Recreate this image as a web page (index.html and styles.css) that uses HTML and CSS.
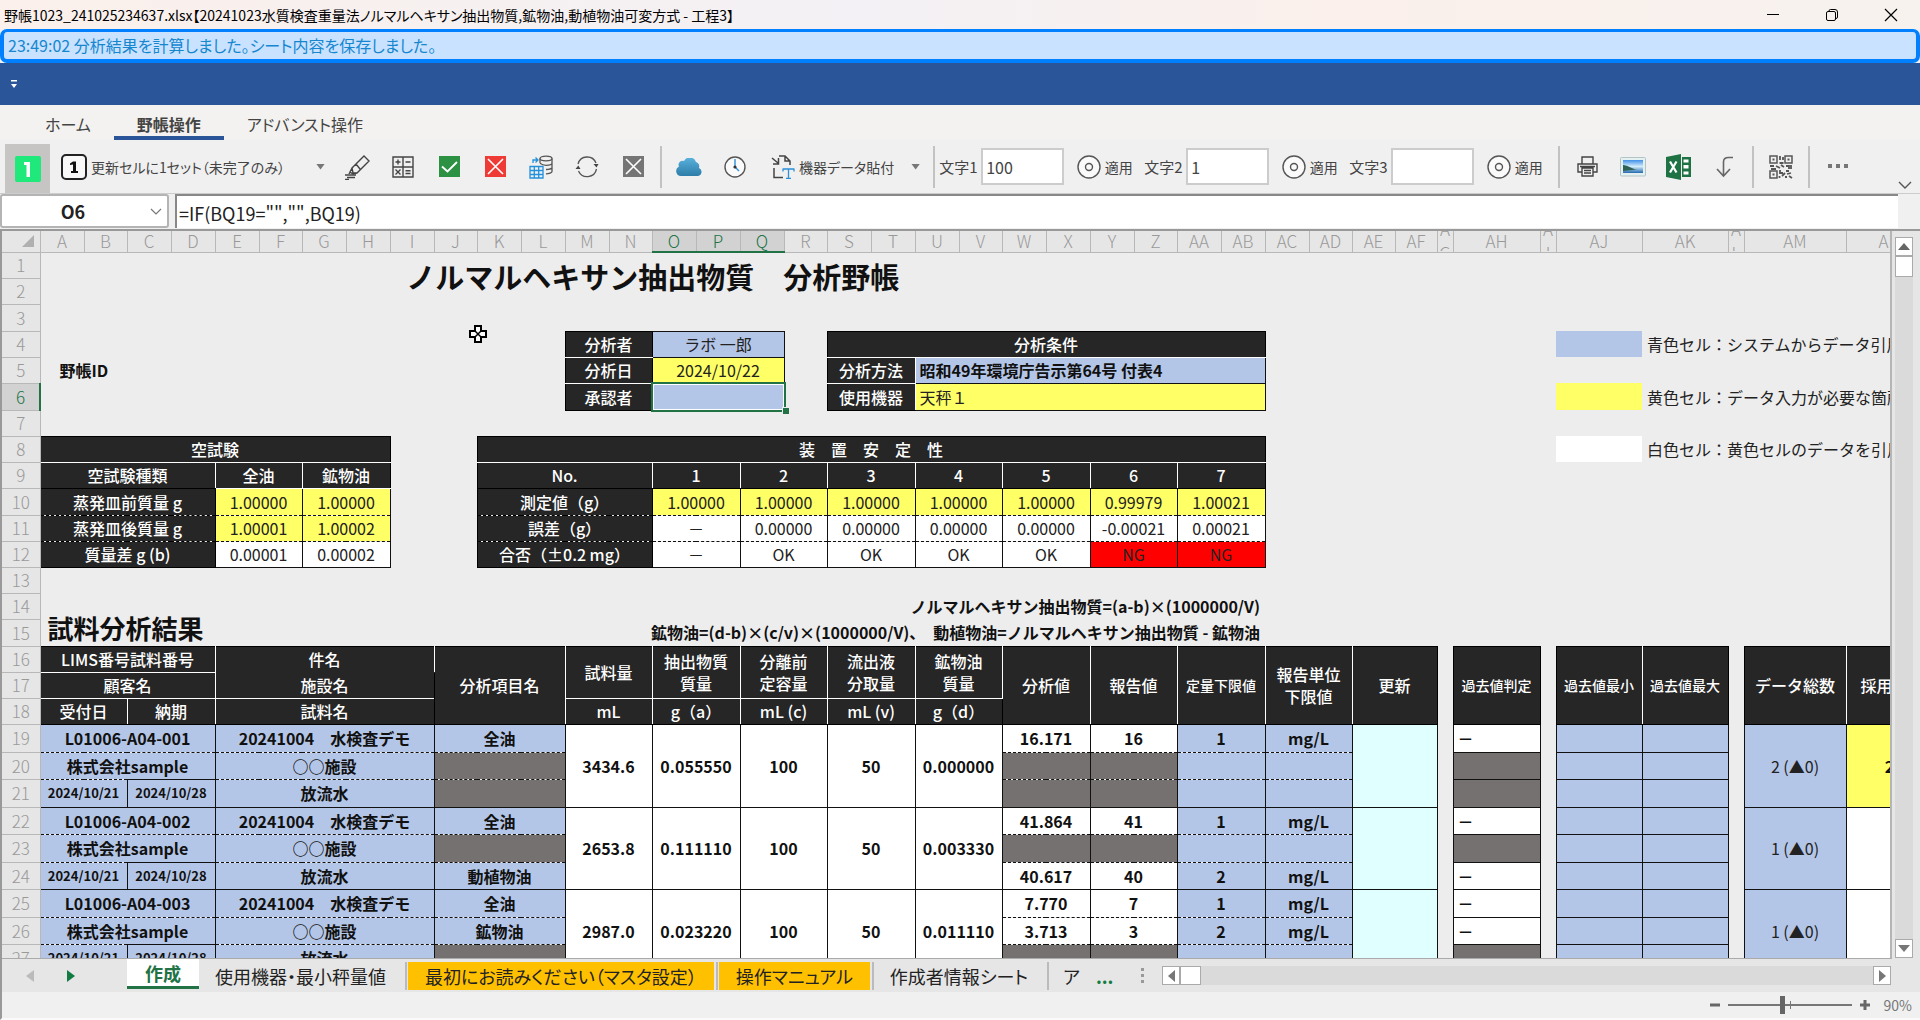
FILE: index.html
```html
<!DOCTYPE html>
<html lang="ja">
<head>
<meta charset="utf-8">
<title>野帳1023_241025234637.xlsx</title>
<link rel="stylesheet" href="styles.css">
</head>
<body>
<header class="titlebar">
  <span class="title-text">野帳1023_241025234637.xlsx【20241023水質検査重量法ノルマルヘキサン抽出物質,鉱物油,動植物油可変方式 - 工程3】</span>
  <div class="window-buttons">
    <button aria-label="最小化"><svg width="14" height="14" viewBox="0 0 14 14"><path d="M1 6.500h12" stroke="#000" fill="none"/></svg></button>
    <button aria-label="元に戻す"><svg width="14" height="14" viewBox="0 0 14 14" fill="none" stroke="#000"><rect x="1.500" y="3.500" width="9" height="9" rx="1.500"/><path d="M4 3.500V3a1.500 1.500 0 0 1 1.500-1.500H10A2.500 2.500 0 0 1 12.500 4v5a1.500 1.500 0 0 1-1.500 1.500"/></svg></button>
    <button aria-label="閉じる"><svg width="14" height="14" viewBox="0 0 14 14"><path d="M1 1l12 12M13 1L1 13" stroke="#000" stroke-width="1.200" fill="none"/></svg></button>
  </div>
</header>
<p class="message" role="status">23:49:02 分析結果を計算しました。シート内容を保存しました。</p>
<div class="quickbar">
  <button aria-label="クイックアクセスのカスタマイズ"><svg width="8" height="9" viewBox="0 0 8 9" fill="#fff"><path d="M1 0h6v1.500H1zM1 4h6L4 8z"/></svg></button>
</div>
<nav class="ribbon-tabs">
  <button class="rtab">ホーム</button>
  <button class="rtab current">野帳操作</button>
  <button class="rtab">アドバンスト操作</button>
</nav>
<div class="toolbar">
  <button class="pressed" aria-label="1"><svg width="26" height="26" viewBox="0 0 26 26"><rect width="26" height="26" rx="2" fill="#1fe97b"/><path d="M9 6h6v15h-3.500V9H9z" fill="#fff"/></svg></button>
  <button class="label-tool update"><svg width="26" height="26" viewBox="0 0 26 26"><rect x="1" y="1" width="24" height="24" rx="4" fill="#f8f8f8" stroke="#222" stroke-width="2"/><path d="M9 9.500l3-2h3V17h2v2H10v-2h2v-6.500L9 11z" fill="#111"/></svg><span>更新セルに1セット（未完了のみ）</span></button>
  <button class="caret" aria-label="更新セルのメニュー"></button>
  <button class="tool" aria-label="マーカー"><svg width="26" height="26" viewBox="0 0 26 26" fill="none" stroke="#444" stroke-width="1.400"><path d="M20 2l5 5-12 12H9l-1-5zM12 10l4 5M8 14l-2 4 3 2 4-1M6 18l-1 2"/><path d="M1 21h11M3 23.500h8M1 25.500h4" stroke-width="1.600"/></svg></button>
  <button class="tool" aria-label="計算"><svg width="22" height="22" viewBox="0 0 22 22" fill="none" stroke="#444" stroke-width="1.400"><path d="M1 1h20v20H1zM11 1v20M1 11h20M3.500 6h5M6 3.500v5M13.500 6h5M3.500 13.500l5 5M8.500 13.500l-5 5M13.500 14.700h5M13.500 17.500h5"/></svg></button>
  <button class="tool" aria-label="完了"><svg width="21" height="21" viewBox="0 0 21 21"><path d="M0 0h21v21H0z" fill="#2d9144"/><path d="M3 10.500l5.500 5L18 6" fill="none" stroke="#fff" stroke-width="1.800"/></svg></button>
  <button class="tool" aria-label="取消"><svg width="21" height="21" viewBox="0 0 21 21"><path d="M0 0h21v21H0z" fill="#ee3b36"/><path d="M3 3l15 15M18 3L3 18" fill="none" stroke="#fff" stroke-width="1.600"/></svg></button>
  <button class="tool" aria-label="データ取込"><svg width="24" height="24" viewBox="0 0 24 24" fill="none"><g stroke="#555" stroke-width="1.300"><ellipse cx="17" cy="3.500" rx="6" ry="2.300"/><path d="M11 3.500V8M23 3.500v13c0 1-3 2.300-6 2.300M23 8c0 1.300-3 2.300-6 2.300-2 0-4-.5-6-2M23 12.500c0 1-3 2-6 2"/></g><path d="M1 11.500h13v11.500H1zM1 15.500h13M1 19.500h13M5.300 11v12M9.700 11v12M4 8V5h5M6.500 2.500L9 5 6.500 7.500" stroke="#2390dc" stroke-width="1.300"/></svg></button>
  <button class="tool" aria-label="更新"><svg width="24" height="24" viewBox="0 0 24 24" fill="none" stroke="#555" stroke-width="1.300"><path d="M3 9a9.500 9.500 0 0 1 18-1M21.500 14a9.500 9.500 0 0 1-18 2"/><path d="M18.500 9h5l-2 3.500zM.5 14h5l-2.200-3.500z" fill="#444" stroke="none"/></svg></button>
  <button class="tool" aria-label="消去"><svg width="21" height="21" viewBox="0 0 21 21"><path d="M0 0h21v21H0z" fill="#757575"/><path d="M3 3l15 15M18 3L3 18" fill="none" stroke="#fff" stroke-width="1.600"/></svg></button>
  <span class="sep"></span>
  <button class="tool" aria-label="クラウド"><svg width="26" height="18" viewBox="0 0 26 18"><defs><linearGradient id="cloud" x1="0" y1="0" x2="0" y2="1"><stop offset="0" stop-color="#59b2dd"/><stop offset="1" stop-color="#2d7da8"/></linearGradient></defs><path d="M5 18a5 5 0 0 1-2-9.500A4 4 0 0 1 8 3a6.500 6.500 0 0 1 12 1 5 5 0 0 1 3 6 4.200 4.200 0 0 1-1 8z" fill="url(#cloud)"/></svg></button>
  <button class="tool" aria-label="時刻"><svg width="22" height="22" viewBox="0 0 22 22" fill="none"><circle cx="11" cy="11" r="10" stroke="#555" stroke-width="1.400" fill="#fafafa"/><path d="M11 3v8l4 4" stroke="#2d8fd8" stroke-width="1.400"/><circle cx="11" cy="11" r="1.600" fill="#333"/></svg></button>
  <button class="label-tool paste"><svg width="24" height="24" viewBox="0 0 24 24" fill="none" stroke="#444" stroke-width="1.500"><path d="M8 1h6l5 5v4M14 1v5h5M3 13v9.500h9M1 3l6 5M7.500 3v6H2"/><path d="M12 14h11M12 13.500v3M23 13.500v3M17.500 14v9.500M15 23.500h5" stroke="#2d8fd8" stroke-width="1.300"/></svg><span>機器データ貼付</span></button>
  <button class="caret" aria-label="貼付メニュー"></button>
  <span class="sep"></span>
  <div class="field"><label for="t1">文字1</label><input id="t1" type="text" value="100"></div>
  <button class="label-tool apply"><svg width="24" height="24" viewBox="0 0 24 24" fill="#fafafa" stroke="#555" stroke-width="1.400"><circle cx="12" cy="12" r="11"/><circle cx="12" cy="12" r="3.500"/></svg><span>適用</span></button>
  <div class="field"><label for="t2">文字2</label><input id="t2" type="text" value="1"></div>
  <button class="label-tool apply"><svg width="24" height="24" viewBox="0 0 24 24" fill="#fafafa" stroke="#555" stroke-width="1.400"><circle cx="12" cy="12" r="11"/><circle cx="12" cy="12" r="3.500"/></svg><span>適用</span></button>
  <div class="field"><label for="t3">文字3</label><input id="t3" type="text" value=""></div>
  <button class="label-tool apply"><svg width="24" height="24" viewBox="0 0 24 24" fill="#fafafa" stroke="#555" stroke-width="1.400"><circle cx="12" cy="12" r="11"/><circle cx="12" cy="12" r="3.500"/></svg><span>適用</span></button>
  <span class="sep"></span>
  <button class="tool" aria-label="印刷"><svg width="21" height="21" viewBox="0 0 21 21" fill="none" stroke="#444" stroke-width="1.400"><path d="M5 8V1h11v7M4.500 16H1V8h19v8h-3.500M5 12h11v8H5zM7 14.500h7M7 17h7M3 10.500h15"/></svg></button>
  <button class="tool" aria-label="画像"><svg width="26" height="20" viewBox="0 0 26 20"><defs><linearGradient id="sky" x1="0" y1="0" x2="0" y2="1"><stop offset="0" stop-color="#3f8fe8"/><stop offset=".5" stop-color="#d3ecfa"/><stop offset="1" stop-color="#2469b0"/></linearGradient></defs><rect x=".5" y=".5" width="25" height="18.500" rx="1" fill="#e4efef" stroke="#b3c4c6"/><path d="M3 3h20v13H3z" fill="url(#sky)"/><path d="M3 8c5 0 8 4 14 4.500L3 14z" fill="#2d6153"/></svg></button>
  <button class="tool" aria-label="Excel"><svg width="26" height="26" viewBox="0 0 26 26"><path d="M16 3h9v20h-9z" fill="#1f7244"/><path d="M17.500 5.500h5v3h-5zM17.500 11h5v3.500h-5zM17.500 17.500h5v3h-5z" fill="#fff"/><path d="M0 3l15-3v26L0 23z" fill="#1f7244"/><path d="M4 7.500l6.500 11M10.500 7.500L4 18.500" stroke="#fff" stroke-width="2.200"/></svg></button>
  <button class="tool" aria-label="移動"><svg width="18" height="22" viewBox="0 0 18 22" fill="none" stroke="#666" stroke-width="1.600"><path d="M17 1.500h-4.500Q7.500 1.500 7.500 6v14M1 13l6.500 7 6.500-7"/></svg></button>
  <span class="sep"></span>
  <button class="tool" aria-label="QRコード"><svg width="24" height="24" viewBox="0 0 24 24" fill="none" stroke="#555" stroke-width="1.500"><path d="M1 1h7v7H1zM16 1h7v7h-7zM1 16h7v7H1z"/><path d="M3.500 3.500h2v2h-2zM18.500 3.500h2v2h-2zM3.500 18.500h2v2h-2z" fill="#555" stroke="none"/><path d="M11 1v4M14 2v3M10.500 8h4M1 11h4M7 11l4 2M12 10l3 2M17 11h3v3M22 10v4M11 15v3h3M13 21l3-3M17 16h3M18 19l4-1M20 21l3 2M10.500 21v2M16 22h2M2 14h5" stroke-width="1.800"/></svg></button>
  <span class="sep"></span>
  <button class="more" aria-label="その他"><svg width="20" height="5" viewBox="0 0 20 5" fill="#777"><path d="M0 0h4v4H0zM8 0h4v4H8zM16 0h4v4h-4z"/></svg></button>
  <button class="fold" aria-label="折りたたむ"><svg width="14" height="8" viewBox="0 0 14 8" fill="none" stroke="#555" stroke-width="1.400"><path d="M1 1l6 6 6-6"/></svg></button>
</div>
<div class="formulabar">
  <div class="namebox"><input type="text" value="O6" aria-label="名前ボックス"><button aria-label="名前の一覧"><svg width="12" height="7" viewBox="0 0 12 7" fill="none" stroke="#777" stroke-width="1.200"><path d="M1 1l5 5 5-5"/></svg></button></div>
  <input class="formula" type="text" aria-label="数式" value='=IF(BQ19="","",BQ19)'>
</div>
<main class="work">
  <div class="sheet">
    <table>
      <colgroup><col class="c38">
        <col class="c44"><col class="c43"><col class="c44"><col class="c44"><col class="c44"><col class="c43"><col class="c44"><col class="c44">
        <col class="c44"><col class="c43"><col class="c44"><col class="c44"><col class="c44"><col class="c43"><col class="c44"><col class="c44">
        <col class="c44"><col class="c43"><col class="c44"><col class="c44"><col class="c44"><col class="c43"><col class="c44"><col class="c44">
        <col class="c44"><col class="c43"><col class="c44"><col class="c44"><col class="c44"><col class="c43"><col class="c43"><col class="c42">
        <col class="c16"><col class="c87"><col class="c16"><col class="c86"><col class="c86"><col class="c16"><col class="c102"><col class="c87">
      </colgroup>
      <thead>
        <tr><th class="corner"><svg width="12" height="12" viewBox="0 0 12 12" fill="#b0b0b0"><path d="M12 0v12H0z"/></svg></th><th>A</th><th>B</th><th>C</th><th>D</th><th>E</th><th>F</th><th>G</th><th>H</th><th>I</th><th>J</th><th>K</th><th>L</th><th>M</th><th>N</th><th class="on">O</th><th class="on">P</th><th class="on">Q</th><th>R</th><th>S</th><th>T</th><th>U</th><th>V</th><th>W</th><th>X</th><th>Y</th><th>Z</th><th>AA</th><th>AB</th><th>AC</th><th>AD</th><th>AE</th><th>AF</th><th class="thin"><span>A<br>G</span></th><th>AH</th><th class="thin"><span>A<br>I</span></th><th>AJ</th><th>AK</th><th class="thin"><span>A<br>L</span></th><th>AM</th><th>AN</th></tr>
      </thead>
      <tbody>
        <tr><th>1</th><td colspan="28" rowspan="2" class="doc-title">ノルマルヘキサン抽出物質　分析野帳</td><td colspan="12"></td></tr>
        <tr><th>2</th><td colspan="12"></td></tr>
        <tr class="h27"><th>3</th><td colspan="40"></td></tr>
        <tr><th>4</th><td colspan="12"></td><td colspan="2" class="k wb">分析者</td><td colspan="3" class="d blue n">ラボ 一郎</td><td></td><td colspan="10" class="k wb">分析条件</td><td colspan="7"></td><td class="blue"></td><td colspan="4" class="legend">青色セル：システムからデータ引用</td></tr>
        <tr><th>5</th><td colspan="2" class="b">野帳ID</td><td colspan="10"></td><td colspan="2" class="k wb">分析日</td><td colspan="3" class="d yellow n">2024/10/22</td><td></td><td colspan="2" class="k wr wb">分析方法</td><td colspan="8" class="d blue left">昭和49年環境庁告示第64号 付表4</td><td colspan="12"></td></tr>
        <tr class="h27"><th class="on">6</th><td colspan="12"></td><td colspan="2" class="k">承認者</td><td colspan="3" class="d blue active"><i class="selection"></i></td><td></td><td colspan="2" class="k wr">使用機器</td><td colspan="8" class="d yellow left n">天秤１</td><td colspan="7"></td><td class="yellow"></td><td colspan="4" class="legend">黄色セル：データ入力が必要な箇所</td></tr>
        <tr><th>7</th><td colspan="40"></td></tr>
        <tr><th>8</th><td colspan="8" class="k wb">空試験</td><td colspan="2"></td><td colspan="18" class="k wb">装　置　安　定　性</td><td colspan="7"></td><td class="white"></td><td colspan="4" class="legend">白色セル：黄色セルのデータを引用</td></tr>
        <tr><th>9</th><td colspan="4" class="k wr">空試験種類</td><td colspan="2" class="k wr wb">全油</td><td colspan="2" class="k wb">鉱物油</td><td colspan="2"></td><td colspan="4" class="k wr">No.</td><td colspan="2" class="k wr">1</td><td colspan="2" class="k wr">2</td><td colspan="2" class="k wr">3</td><td colspan="2" class="k wr">4</td><td colspan="2" class="k wr">5</td><td colspan="2" class="k wr">6</td><td colspan="2" class="k">7</td><td colspan="12"></td></tr>
        <tr class="h27 r1"><th>10</th><td colspan="4" class="k q">蒸発皿前質量 g</td><td colspan="2" class="d yellow n q">1.00000</td><td colspan="2" class="d yellow n q">1.00000</td><td colspan="2"></td><td colspan="4" class="k q">測定値（g）</td><td colspan="2" class="d yellow n q">1.00000</td><td colspan="2" class="d yellow n q">1.00000</td><td colspan="2" class="d yellow n q">1.00000</td><td colspan="2" class="d yellow n q">1.00000</td><td colspan="2" class="d yellow n q">1.00000</td><td colspan="2" class="d yellow n q">0.99979</td><td colspan="2" class="d yellow n q">1.00021</td><td colspan="12"></td></tr>
        <tr class="r2"><th>11</th><td colspan="4" class="k q">蒸発皿後質量 g</td><td colspan="2" class="d yellow n q">1.00001</td><td colspan="2" class="d yellow n q">1.00002</td><td colspan="2"></td><td colspan="4" class="k q">誤差（g）</td><td colspan="2" class="d white n q">－</td><td colspan="2" class="d white n q">0.00000</td><td colspan="2" class="d white n q">0.00000</td><td colspan="2" class="d white n q">0.00000</td><td colspan="2" class="d white n q">0.00000</td><td colspan="2" class="d white n q">-0.00021</td><td colspan="2" class="d white n q">0.00021</td><td colspan="12"></td></tr>
        <tr class="r3"><th>12</th><td colspan="4" class="k q">質量差 g (b)</td><td colspan="2" class="d white n q">0.00001</td><td colspan="2" class="d white n q">0.00002</td><td colspan="2"></td><td colspan="4" class="k q">合否（±0.2 mg）</td><td colspan="2" class="d white n q">－</td><td colspan="2" class="d white n q">OK</td><td colspan="2" class="d white n q">OK</td><td colspan="2" class="d white n q">OK</td><td colspan="2" class="d white n q">OK</td><td colspan="2" class="d red n q">NG</td><td colspan="2" class="d red n q">NG</td><td colspan="12"></td></tr>
        <tr><th>13</th><td colspan="40"></td></tr>
        <tr><th>14</th><td colspan="8" rowspan="2" class="section">試料分析結果</td><td colspan="20" class="expr">ノルマルヘキサン抽出物質=(a-b)×(1000000/V)</td><td colspan="12"></td></tr>
        <tr class="h27"><th>15</th><td colspan="20" class="expr">鉱物油=(d-b)×(c/v)×(1000000/V)、　動植物油=ノルマルヘキサン抽出物質 - 鉱物油</td><td colspan="12"></td></tr>
        <tr><th>16</th><td colspan="4" class="k wr wb">LIMS番号試料番号</td><td colspan="5" class="k wr open">件名</td><td colspan="3" rowspan="3" class="k wr">分析項目名</td><td colspan="2" rowspan="2" class="k wr wb">試料量</td><td colspan="2" rowspan="2" class="k wr wb">抽出物質<br>質量</td><td colspan="2" rowspan="2" class="k wr wb">分離前<br>定容量</td><td colspan="2" rowspan="2" class="k wr wb">流出液<br>分取量</td><td colspan="2" rowspan="2" class="k wr wb">鉱物油<br>質量</td><td colspan="2" rowspan="3" class="k wr">分析値</td><td colspan="2" rowspan="3" class="k wr">報告値</td><td colspan="2" rowspan="3" class="k wr sm">定量下限値</td><td colspan="2" rowspan="3" class="k wr">報告単位<br>下限値</td><td colspan="2" rowspan="3" class="k">更新</td><td rowspan="3"></td><td rowspan="3" class="k sm">過去値判定</td><td rowspan="3"></td><td rowspan="3" class="k wr sm">過去値最小</td><td rowspan="3" class="k sm">過去値最大</td><td rowspan="3"></td><td rowspan="3" class="k wr">データ総数</td><td rowspan="3" class="k cut">採用</td></tr>
        <tr><th>17</th><td colspan="4" class="k wr wb">顧客名</td><td colspan="5" class="k wr wb">施設名</td></tr>
        <tr><th>18</th><td colspan="2" class="k wr">受付日</td><td colspan="2" class="k wr">納期</td><td colspan="5" class="k wr">試料名</td><td colspan="2" class="k wr">mL</td><td colspan="2" class="k wr">g（a）</td><td colspan="2" class="k wr">mL (c)</td><td colspan="2" class="k wr">mL (v)</td><td colspan="2" class="k wr">g（d）</td></tr>

        <tr class="h28 r1"><th>19</th><td colspan="4" class="d blue q">L01006-A04-001</td><td colspan="5" class="d blue q">20241004　水検査デモ</td><td colspan="3" class="d blue q">全油</td><td colspan="2" rowspan="3" class="d white">3434.6</td><td colspan="2" rowspan="3" class="d white">0.055550</td><td colspan="2" rowspan="3" class="d white">100</td><td colspan="2" rowspan="3" class="d white">50</td><td colspan="2" rowspan="3" class="d white">0.000000</td><td colspan="2" class="d white q">16.171</td><td colspan="2" class="d white q">16</td><td colspan="2" class="d blue q">1</td><td colspan="2" class="d blue q">mg/L</td><td colspan="2" rowspan="3" class="d cyan"></td><td rowspan="3"></td><td class="d white left">－</td><td rowspan="3"></td><td class="d blue"></td><td class="d blue"></td><td rowspan="3"></td><td rowspan="3" class="d blue n">2 (▲0)</td><td rowspan="3" class="d yellow">2</td></tr>
        <tr class="h27 r2"><th>20</th><td colspan="4" class="d blue q">株式会社sample</td><td colspan="5" class="d blue q">○○施設</td><td colspan="3" class="d gray q"></td><td colspan="2" class="d gray q"></td><td colspan="2" class="d gray q"></td><td colspan="2" class="d blue q"></td><td colspan="2" class="d blue q"></td><td class="d gray"></td><td class="d blue"></td><td class="d blue"></td></tr>
        <tr class="h28 r3"><th>21</th><td colspan="2" class="d blue q date">2024/10/21</td><td colspan="2" class="d blue date">2024/10/28</td><td colspan="5" class="d blue q">放流水</td><td colspan="3" class="d gray q"></td><td colspan="2" class="d gray q"></td><td colspan="2" class="d gray q"></td><td colspan="2" class="d blue q"></td><td colspan="2" class="d blue q"></td><td class="d gray"></td><td class="d blue"></td><td class="d blue"></td></tr>

        <tr class="h27 r1"><th>22</th><td colspan="4" class="d blue q">L01006-A04-002</td><td colspan="5" class="d blue q">20241004　水検査デモ</td><td colspan="3" class="d blue q">全油</td><td colspan="2" rowspan="3" class="d white">2653.8</td><td colspan="2" rowspan="3" class="d white">0.111110</td><td colspan="2" rowspan="3" class="d white">100</td><td colspan="2" rowspan="3" class="d white">50</td><td colspan="2" rowspan="3" class="d white">0.003330</td><td colspan="2" class="d white q">41.864</td><td colspan="2" class="d white q">41</td><td colspan="2" class="d blue q">1</td><td colspan="2" class="d blue q">mg/L</td><td colspan="2" rowspan="3" class="d cyan"></td><td rowspan="3"></td><td class="d white left">－</td><td rowspan="3"></td><td class="d blue"></td><td class="d blue"></td><td rowspan="3"></td><td rowspan="3" class="d blue n">1 (▲0)</td><td rowspan="3" class="d white"></td></tr>
        <tr class="h28 r2"><th>23</th><td colspan="4" class="d blue q">株式会社sample</td><td colspan="5" class="d blue q">○○施設</td><td colspan="3" class="d gray q"></td><td colspan="2" class="d gray q"></td><td colspan="2" class="d gray q"></td><td colspan="2" class="d blue q"></td><td colspan="2" class="d blue q"></td><td class="d gray"></td><td class="d blue"></td><td class="d blue"></td></tr>
        <tr class="h27 r3"><th>24</th><td colspan="2" class="d blue q date">2024/10/21</td><td colspan="2" class="d blue date">2024/10/28</td><td colspan="5" class="d blue q">放流水</td><td colspan="3" class="d blue q">動植物油</td><td colspan="2" class="d white q">40.617</td><td colspan="2" class="d white q">40</td><td colspan="2" class="d blue q">2</td><td colspan="2" class="d blue q">mg/L</td><td class="d white left">－</td><td class="d blue"></td><td class="d blue"></td></tr>

        <tr class="h28 r1"><th>25</th><td colspan="4" class="d blue q">L01006-A04-003</td><td colspan="5" class="d blue q">20241004　水検査デモ</td><td colspan="3" class="d blue q">全油</td><td colspan="2" rowspan="3" class="d white">2987.0</td><td colspan="2" rowspan="3" class="d white">0.023220</td><td colspan="2" rowspan="3" class="d white">100</td><td colspan="2" rowspan="3" class="d white">50</td><td colspan="2" rowspan="3" class="d white">0.011110</td><td colspan="2" class="d white q">7.770</td><td colspan="2" class="d white q">7</td><td colspan="2" class="d blue q">1</td><td colspan="2" class="d blue q">mg/L</td><td colspan="2" rowspan="3" class="d cyan"></td><td rowspan="3"></td><td class="d white left">－</td><td rowspan="3"></td><td class="d blue"></td><td class="d blue"></td><td rowspan="3"></td><td rowspan="3" class="d blue n">1 (▲0)</td><td rowspan="3" class="d white"></td></tr>
        <tr class="h27 r2"><th>26</th><td colspan="4" class="d blue q">株式会社sample</td><td colspan="5" class="d blue q">○○施設</td><td colspan="3" class="d blue q">鉱物油</td><td colspan="2" class="d white q">3.713</td><td colspan="2" class="d white q">3</td><td colspan="2" class="d blue q">2</td><td colspan="2" class="d blue q">mg/L</td><td class="d white left">－</td><td class="d blue"></td><td class="d blue"></td></tr>
        <tr class="h28 r3"><th>27</th><td colspan="2" class="d blue q date">2024/10/21</td><td colspan="2" class="d blue date">2024/10/28</td><td colspan="5" class="d blue q">放流水</td><td colspan="3" class="d gray q"></td><td colspan="2" class="d gray q"></td><td colspan="2" class="d gray q"></td><td colspan="2" class="d blue q"></td><td colspan="2" class="d blue q"></td><td class="d gray"></td><td class="d blue"></td><td class="d blue"></td></tr>
      </tbody>
    </table>
    <svg class="pointer" width="18" height="18" viewBox="0 0 18 18"><path d="M6 1h6v5h5v6h-5v5H6v-5H1V6h5z" fill="#fff" stroke="#000" stroke-width="2"/><path d="M5 5l8 8M13 5l-8 8" stroke="#000" stroke-width="1.500"/></svg>
  </div>
  <div class="vscroll">
    <button aria-label="上へ"><svg width="12" height="7" viewBox="0 0 12 7" fill="#666"><path d="M6 0l6 7H0z"/></svg></button>
    <div class="vthumb"></div>
    <button class="end" aria-label="下へ"><svg width="12" height="7" viewBox="0 0 12 7" fill="#777"><path d="M0 0h12L6 7z"/></svg></button>
  </div>
</main>
<div class="sheetbar">
  <button class="nav" aria-label="前のシート"><svg width="8" height="12" viewBox="0 0 8 12" fill="#bbb"><path d="M8 0v12L0 6z"/></svg></button>
  <button class="nav" aria-label="次のシート"><svg width="8" height="12" viewBox="0 0 8 12" fill="#107c41"><path d="M0 0v12l8-6z"/></svg></button>
  <button class="stab current">作成</button>
  <button class="stab">使用機器・最小秤量値</button>
  <button class="stab orange">最初にお読みください（マスタ設定）</button>
  <button class="stab orange">操作マニュアル</button>
  <button class="stab">作成者情報シート</button>
  <button class="stab last">ア</button>
  <button class="stab dots">...</button>
  <span class="grip"><svg width="4" height="16" viewBox="0 0 4 16" fill="#999"><path d="M0 0h3v3H0zM0 6h3v3H0zM0 12h3v3H0z"/></svg></span>
  <div class="hscroll">
    <button aria-label="左へ"><svg width="7" height="12" viewBox="0 0 7 12" fill="#777"><path d="M7 0v12L0 6z"/></svg></button>
    <div class="hthumb"></div>
    <button class="end" aria-label="右へ"><svg width="7" height="12" viewBox="0 0 7 12" fill="#777"><path d="M0 0v12l7-6z"/></svg></button>
  </div>
</div>
<footer class="status">
  <button aria-label="縮小"><svg width="10" height="10" viewBox="0 0 10 10" fill="#666"><path d="M0 3.500h10v3H0z"/></svg></button>
  <input type="range" min="0" max="100" value="44" aria-label="ズーム">
  <button aria-label="拡大"><svg width="10" height="10" viewBox="0 0 10 10" fill="#666"><path d="M0 3.500h10v3H0zM3.500 0h3v10h-3z"/></svg></button>
  <output>90%</output>
</footer>
</body>
</html>
```
FILE: styles.css
```css
* { box-sizing: border-box; }
html { height: 100%; }
body {
  margin: 0;
  height: 100%;
  display: flex;
  flex-direction: column;
  overflow: hidden;
  background: #f0f0f0;
  color: #444;
  font-family: "Noto Sans CJK JP", "Liberation Sans", sans-serif;
  font-size: 16px;
}
button, input { font: inherit; color: inherit; }
button { border: 0; padding: 0; margin: 0; background: none; display: flex; align-items: center; justify-content: center; }
svg { display: block; flex: none; }

/* Window chrome */
.titlebar {
  flex: none;
  height: 29px;
  display: flex;
  align-items: center;
  justify-content: space-between;
  padding-left: 4px;
  background: linear-gradient(90deg, #fbf0eb, #f3f1f5 45%, #fbf0eb 70%, #f7f2ee);
  color: #000;
  font-size: 14px;
  font-feature-settings: "palt";
  white-space: nowrap;
}
.window-buttons { display: flex; }
.window-buttons button { width: 59px; height: 29px; }
.message {
  flex: none;
  margin: 0;
  height: 34px;
  border: 4px solid #0080ff;
  border-top-width: 3px;
  border-radius: 7px;
  background: #c8e2ff;
  color: #1687cf;
  padding-left: 4px;
  line-height: 27px;
  font-feature-settings: "palt";
}
.quickbar { flex: none; height: 42px; background: #2a5699; display: flex; align-items: center; padding-left: 10px; }

/* Ribbon */
.ribbon-tabs { flex: none; height: 35px; display: flex; background: #f3f2f0; padding-left: 22px; font-feature-settings: "palt"; }
.rtab { height: 35px; padding: 6px 23px 0; border-bottom: 4px solid transparent; }
.rtab.current { font-weight: 700; border-color: #2a5699; }
.toolbar {
  flex: none;
  height: 54px;
  display: flex;
  align-items: center;
  padding: 0 8px 0 5px;
  border-bottom: 1px solid #ccc;
  font-size: 15px;
  font-feature-settings: "palt";
  white-space: nowrap;
}
.pressed { width: 45px; height: 49px; margin: 4px 11px 0 0; background: #c6c5c4; }
.tool { flex: none; width: 46px; height: 42px; }
.label-tool { gap: 4px; font-size: 14px; }
.update { margin-right: 14px; }
.paste { margin-left: 13px; }
.caret { width: 9px; height: 6px; margin: 0 9px 0 17px; background: #777; clip-path: polygon(0 0, 100% 0, 50% 100%); }
.sep { width: 2px; height: 42px; margin: 0 4px; background: #c2c2c2; }
.field { display: flex; align-items: center; gap: 4px; }
.field label { width: 38px; }
.field input { width: 83px; height: 37px; border: 2px solid #ccc; background: #fff; padding: 0 3px; font-size: 16px; color: #444; }
.apply { width: 57px; margin: 0 11px 0 12px; }
.more { margin-left: 14px; }
.fold { align-self: flex-end; margin: 0 0 4px auto; }

/* Formula bar */
.formulabar { flex: none; height: 35px; display: flex; gap: 6px; padding: 0 22px 0 0; color: #222; }
.namebox { flex: none; width: 169px; height: 34px; display: flex; border: 2px solid #b4b4b4; border-radius: 3px; background: #fff; }
.namebox input { width: 142px; border: 0; outline: 0; padding: 0; background: none; text-align: center; font-weight: 700; font-size: 18px; }
.namebox button { width: 24px; }
.formula { flex: 1; height: 34px; border: solid #888; border-width: 2px 0 0 2px; outline: 0; padding: 2px 2px 0; background: #fff; font-size: 18px; }

/* Sheet */
.work { flex: 1; min-height: 0; display: flex; border-top: 2px solid #999; border-left: 2px solid #999; background: #e6e6e6; }
.sheet { flex: 1; min-width: 0; position: relative; overflow: hidden; background: #ededed; border-right: 2px solid #b5b5b5; border-bottom: 1px solid #aaa; }
table { border-collapse: collapse; table-layout: fixed; width: 1931px; color: #111; }
.c16 { width: 16px; } .c38 { width: 38px; } .c42 { width: 42px; } .c43 { width: 43px; } .c44 { width: 44px; }
.c86 { width: 86px; } .c87 { width: 87px; } .c102 { width: 102px; }
tr { height: 26px; }
thead tr { height: 21px; }
.h27 { height: 27px; }
.h28 { height: 28px; }
th { padding: 0; height: 20px; line-height: 20px; font-size: 17px; font-weight: 300; color: #999; background: #e6e6e6; border: 1px solid #b8b8b8; border-top: 0; border-left: 0; }
th.on { background: #d2d2d2; color: #217346; }
thead th.on { border-bottom: 2px solid #217346; }
tbody th.on { border-right: 2px solid #217346; }
.corner svg { margin-left: 20px; }
.thin span { display: flex; flex-direction: column; justify-content: center; height: 20px; line-height: 24px; overflow: hidden; }
td { padding: 0; line-height: 20px; text-align: center; white-space: nowrap; overflow: hidden; font-weight: 700; }
.doc-title { font-size: 29px; line-height: 40px; padding-bottom: 5px; }
.section { text-align: left; padding: 0 0 3px 7px; font-size: 26px; line-height: 30px; vertical-align: bottom; }
.expr { text-align: right; padding-right: 5px; }
.k { background: #262626; color: #fff; border: 1px solid #000; line-height: 22px; font-weight: 500; }
.k.wr { border-right-color: #fff; }
.k.wb { border-bottom-color: #fff; }
.k.open { border-bottom-color: #262626; }
.k.cut { text-align: left; padding-left: 14px; }
.sm { font-size: 14px; }
.d { border: 1px solid #111; }
.n, .legend { font-weight: 400; color: #222; }
.left { text-align: left; padding-left: 4px; }
.legend { text-align: left; padding-left: 5px; }
.date { font-size: 13px; }
.blue { background: #b4c6e7; }
.yellow { background: #ffff66; }
.white { background: #fff; }
.gray { background: #767171; }
.cyan { background: #e0ffff; }
.red { background: #f00; }
.r1 .q { border-bottom-style: dashed; }
.r2 .q { border-top-style: dashed; border-bottom-style: dashed; }
.r3 .q { border-top-style: dashed; }
.active { position: relative; overflow: visible; }
.selection { position: absolute; inset: -2px; border: 2px solid #217346; box-shadow: inset 0 0 0 1px #fff; }
.selection::after { content: ""; position: absolute; right: -5px; bottom: -4px; width: 6px; height: 6px; background: #217346; border: solid #ededed; border-width: 1px 0 0 1px; box-sizing: content-box; }
.pointer { position: absolute; left: 467px; top: 94px; }

/* Scroll bars */
.vscroll { flex: none; width: 18px; margin: 6px 7px 1px 3px; display: flex; flex-direction: column; background: #dadada; }
.vscroll button, .hscroll button { width: 18px; height: 19px; border: 1px solid #aaa; background: #fff; }
.vthumb { height: 21px; border: 1px solid #aaa; background: #fff; }
.vscroll .end { margin-top: auto; }
.hscroll { flex: 1; display: flex; margin: 0 29px 0 17px; height: 19px; background: #dadada; }
.hthumb { width: 21px; height: 19px; border: 1px solid #aaa; background: #fff; }
.hscroll .end { margin-left: auto; }

/* Sheet tabs */
.sheetbar { flex: none; height: 33px; display: flex; align-items: center; padding-left: 7px; background: #e6e6e6; border-left: 2px solid #999; font-size: 18px; color: #222; font-feature-settings: "palt"; white-space: nowrap; }
.nav { width: 41px; height: 28px; }
.stab { height: 28px; padding: 0 19px 0 16px; border-right: 2px solid #bbb; }
.stab.current { align-self: flex-start; height: 30px; margin-left: 36px; padding: 0 18px; border: 0; border-bottom: 3px solid #217346; background: #fff; color: #217346; font-weight: 700; }
.stab.orange { margin: 0 4px 0 1px; padding: 0 17px; border: 0; background: #ffc000; box-shadow: 2px 0 #e6e6e6, 4px 0 #bbb; }
.stab.last { padding: 0 14px; border: 0; }
.stab.dots { color: #107c41; padding: 0 28px 0 2px; border: 0; font-weight: 700; }

/* Status bar */
.status { flex: none; height: 28px; display: flex; align-items: center; gap: 8px; padding-right: 8px; border-left: 2px solid #999; border-bottom: 2px solid #fafafa; justify-content: flex-end; color: #777; }
.status input { appearance: none; width: 124px; height: 20px; margin: 0; background: linear-gradient(#777, #777) 50% 50% / 100% 2px no-repeat, linear-gradient(#777, #777) 50% 50% / 1px 8px no-repeat; }
.status input::-webkit-slider-thumb { appearance: none; width: 5px; height: 18px; background: #666; }
.status output { width: 34px; text-align: right; font-size: 14px; }
```
